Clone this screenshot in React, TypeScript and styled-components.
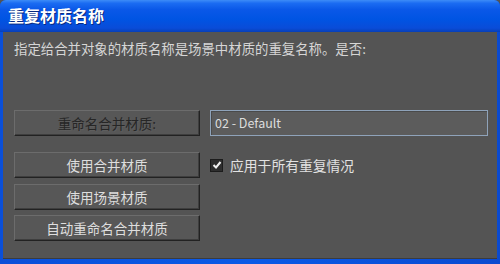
import React from 'react';
import styled, {createGlobalStyle} from "styled-components";

const GlobalStyle = createGlobalStyle`
  html, body {
    margin: 0;
    padding: 0;
    background: #545454;
  }
  * {
    box-sizing: border-box;
  }
`;

const font = `"Noto Sans CJK SC", "Liberation Sans", sans-serif`;

const App = () => {
  return (
    <>
      <GlobalStyle/>
      <Window>
        <TitleBar>
          <Title>重复材质名称</Title>
        </TitleBar>
        <Body>
          <Prompt>指定给合并对象的材质名称是场景中材质的重复名称。是否:</Prompt>
          <RenameRow>
            <Button $dim>重命名合并材质:</Button>
            <NameInput defaultValue="02 - Default"/>
          </RenameRow>
          <Actions>
            <ActionRow>
              <Button>使用合并材质</Button>
              <CheckLabel>
                <CheckBox>
                  <svg width="10" height="10" viewBox="0 0 10 10">
                    <path d="M1.5 5 L4 7.5 L8.5 2" fill="none" stroke="#f2f2f2" strokeWidth="2"/>
                  </svg>
                </CheckBox>
                应用于所有重复情况
              </CheckLabel>
            </ActionRow>
            <ActionRow $gap={6}>
              <Button>使用场景材质</Button>
            </ActionRow>
            <ActionRow $gap={5}>
              <Button>自动重命名合并材质</Button>
            </ActionRow>
          </Actions>
        </Body>
      </Window>
    </>
  );
};

const Window = styled.div`
  width: 500px;
  height: 264px;
  display: flex;
  flex-direction: column;
  background: linear-gradient(90deg, #0a4fd8 0%, #0b5ae6 50%, #0a4ad0 100%);
  border-radius: 6px 6px 0 0;
  overflow: hidden;
  font-family: ${font};
`;
const TitleBar = styled.div`
  height: 32px;
  display: flex;
  align-items: center;
  padding: 0 8px 2px;
  background: linear-gradient(180deg, #3d8cf7 0%, #1b6cf2 10%, #0a58e8 30%, #0054e3 60%, #0a4cd8 88%, #073fb6 100%);
  flex-shrink: 0;
`;
const Title = styled.div`
  color: #ffffff;
  font-size: 16px;
  font-weight: 700;
  text-shadow: 1px 1px 0 #0a2a80;
`;
const Body = styled.div`
  flex: 1;
  margin: 0 3px 5px 3px;
  background: #545454;
  padding: 7px 9px 0 11px;
  display: flex;
  flex-direction: column;
  border-bottom: 1px solid #3c3c3c;
`;
const Prompt = styled.div`
  color: #d6d6d6;
  font-size: 13.4px;
  line-height: 18px;
  padding-left: 0;
`;
const RenameRow = styled.div`
  display: flex;
  gap: 10px;
  margin-top: 53px;
  height: 26px;
`;
const Button = styled.div<{ $dim?: boolean }>`
  width: 186px;
  height: 26px;
  flex-shrink: 0;
  display: flex;
  align-items: center;
  justify-content: center;
  background: #575757;
  border-top: 1px solid #6c6c6c;
  border-left: 1px solid #6c6c6c;
  border-right: 1px solid #222;
  border-bottom: 1px solid #222;
  box-shadow: inset -1px -1px 0 #3e3e3e;
  color: ${p => p.$dim ? "#262626" : "#dedede"};
  text-shadow: ${p => p.$dim ? "1px 1px 0 #5e5e5e" : "none"};
  font-size: 13.5px;
  padding-bottom: 1px;
`;
const NameInput = styled.input`
  width: 279px;
  height: 26px;
  background: #5c5c5c;
  border: 1px solid #8fa3ba;
  box-shadow: inset 1px 1px 0 #4a4a4a;
  color: #dcdcdc;
  font-family: ${font};
  font-size: 12.5px;
  padding: 0 4px 2px;
  outline: none;
`;
const Actions = styled.div`
  display: flex;
  flex-direction: column;
  margin-top: 16px;
`;
const ActionRow = styled.div<{ $gap?: number }>`
  display: flex;
  align-items: center;
  gap: 10px;
  margin-top: ${p => p.$gap ?? 0}px;
`;
const CheckLabel = styled.label`
  display: flex;
  align-items: center;
  gap: 7px;
  color: #e2e2e2;
  font-size: 13.8px;
`;
const CheckBox = styled.span`
  width: 13px;
  height: 13px;
  display: flex;
  align-items: center;
  justify-content: center;
  background: #2e2e2e;
  border: 1px solid #1c1c1c;
`;

export default App;
